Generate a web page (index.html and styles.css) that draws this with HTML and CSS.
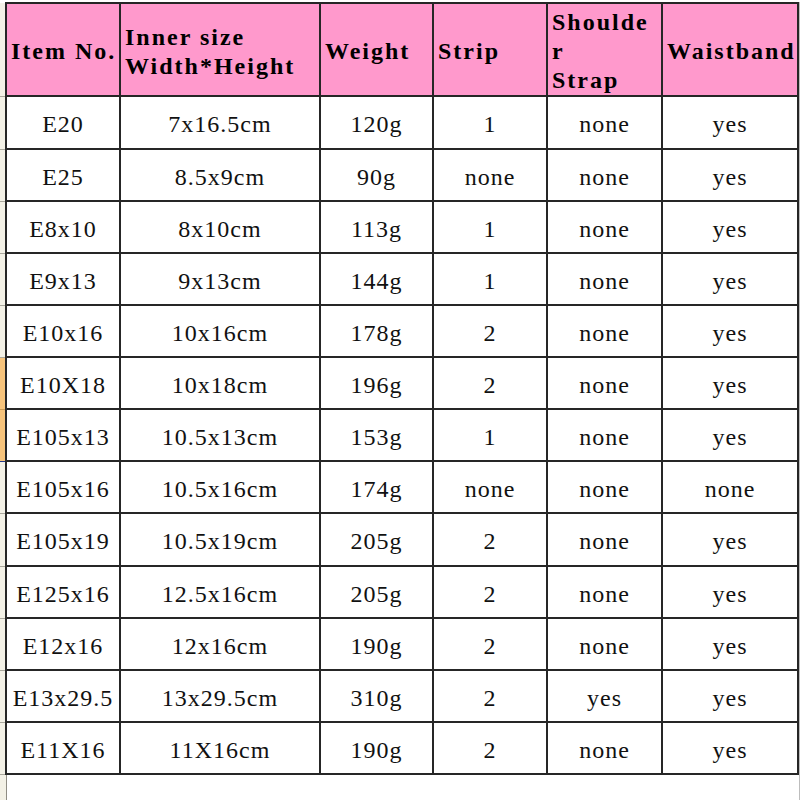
FILE: index.html
```html
<!DOCTYPE html>
<html>
<head>
<meta charset="utf-8">
<title>Item sizes</title>
<link rel="stylesheet" href="styles.css">
</head>
<body>
<div class="sheet-wrap">
<table class="sheet">
<colgroup>
<col class="w-rh"><col class="w1"><col class="w2"><col class="w3"><col class="w4"><col class="w5"><col class="w6">
</colgroup>
<thead>
<tr class="head">
<td class="rh"></td>
<th>Item No.</th>
<th>Inner size<br>Width*Height</th>
<th>Weight</th>
<th>Strip</th>
<th>Shoulde<br>r<br>Strap</th>
<th>Waistband</th>
</tr>
</thead>
<tbody>
<tr class="tall"><td class="rh"></td><td>E20</td><td>7x16.5cm</td><td>120g</td><td>1</td><td>none</td><td>yes</td></tr>
<tr><td class="rh"></td><td>E25</td><td>8.5x9cm</td><td>90g</td><td>none</td><td>none</td><td>yes</td></tr>
<tr><td class="rh"></td><td>E8x10</td><td>8x10cm</td><td>113g</td><td>1</td><td>none</td><td>yes</td></tr>
<tr><td class="rh"></td><td>E9x13</td><td>9x13cm</td><td>144g</td><td>1</td><td>none</td><td>yes</td></tr>
<tr><td class="rh"></td><td>E10x16</td><td>10x16cm</td><td>178g</td><td>2</td><td>none</td><td>yes</td></tr>
<tr><td class="rh sel"></td><td>E10X18</td><td>10x18cm</td><td>196g</td><td>2</td><td>none</td><td>yes</td></tr>
<tr><td class="rh sel sel-last"></td><td>E105x13</td><td>10.5x13cm</td><td>153g</td><td>1</td><td>none</td><td>yes</td></tr>
<tr><td class="rh"></td><td>E105x16</td><td>10.5x16cm</td><td>174g</td><td>none</td><td>none</td><td>none</td></tr>
<tr class="tall"><td class="rh"></td><td>E105x19</td><td>10.5x19cm</td><td>205g</td><td>2</td><td>none</td><td>yes</td></tr>
<tr><td class="rh"></td><td>E125x16</td><td>12.5x16cm</td><td>205g</td><td>2</td><td>none</td><td>yes</td></tr>
<tr><td class="rh"></td><td>E12x16</td><td>12x16cm</td><td>190g</td><td>2</td><td>none</td><td>yes</td></tr>
<tr><td class="rh"></td><td>E13x29.5</td><td>13x29.5cm</td><td>310g</td><td>2</td><td>yes</td><td>yes</td></tr>
<tr><td class="rh"></td><td>E11X16</td><td>11X16cm</td><td>190g</td><td>2</td><td>none</td><td>yes</td></tr>
<tr class="blank"><td class="rh"></td><td></td><td></td><td></td><td></td><td></td><td></td></tr>
</tbody>
</table>
<div class="edge"></div>
</div>
</body>
</html>
```

FILE: styles.css
```css
html, body {
  margin: 0;
  padding: 0;
  background: #ffffff;
}

body {
  width: 800px;
  height: 800px;
  overflow: hidden;
  padding-top: 2px;
  box-sizing: border-box;
}

.sheet-wrap {
  display: flex;
  align-items: stretch;
}

.sheet {
  border-collapse: collapse;
  table-layout: fixed;
  width: 798px;
  font-family: "Liberation Serif", "Times New Roman", serif;
  color: #111;
}

.w-rh { width: 6px; }
.w1 { width: 114px; }
.w2 { width: 200px; }
.w3 { width: 113px; }
.w4 { width: 114px; }
.w5 { width: 115px; }
.w6 { width: 136px; }

.sheet th,
.sheet td {
  border: 2px solid #262626;
  padding: 0;
}

.sheet tbody td {
  text-align: center;
  vertical-align: middle;
  font-size: 24px;
  letter-spacing: 1px;
  padding-top: 4px;
  box-sizing: border-box;
  height: 52px;
  white-space: nowrap;
}

.sheet tbody tr.tall td {
  height: 53px;
}

.sheet th {
  background: #ff99cc;
  font-weight: bold;
  font-size: 24px;
  letter-spacing: 2px;
  line-height: 29px;
  text-align: left;
  vertical-align: middle;
  padding: 4px 0 0 4px;
  height: 92px;
  box-sizing: border-box;
  white-space: nowrap;
  overflow: visible;
  color: #000;
}

.sheet .rh,
.sheet tbody .rh,
.sheet thead .rh {
  background: #f3f1e6;
  border: none;
  border-bottom: 1px solid #a9a79c;
  border-right: 1px solid #8f8d84;
  padding: 0;
}

.sheet .rh.sel {
  background: #f7c47c;
  border-right: 1px solid #23398a;
  border-bottom: 1px solid #c99a55;
}

.sheet .rh.sel-last {
  border-bottom: 1px solid #23398a;
}

.sheet tr.blank td {
  border: none;
  height: 30px;
}

.sheet tr.blank td.rh {
  border-right: 1px solid #8f8d84;
  border-bottom: 1px solid #a9a79c;
}

.edge {
  flex: 1;
  background: #d9d9d9;
  border-left: 1px solid #bdbdbd;
}
```
